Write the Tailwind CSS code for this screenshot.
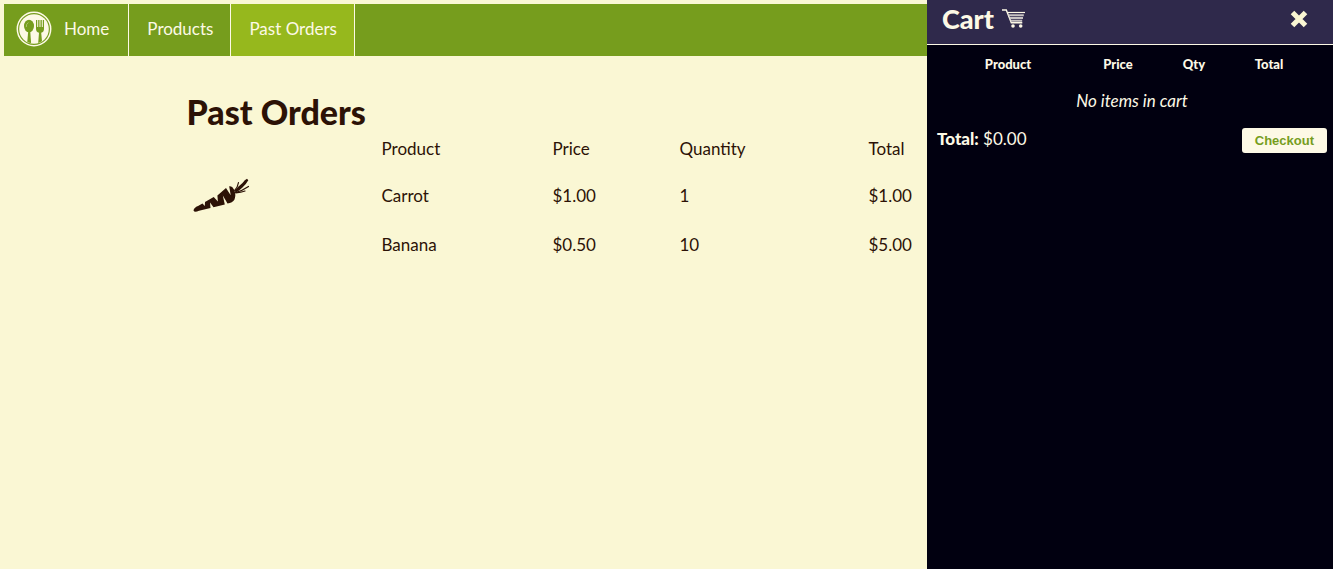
<!DOCTYPE html>
<html lang="en">
<head>
<meta charset="utf-8">
<meta name="viewport" content="width=device-width, initial-scale=1">
<title>Past Orders</title>
<script src="https://cdn.jsdelivr.net/npm/@tailwindcss/browser@4"></script>
</head>
<body class="min-h-screen bg-[#faf7d4] p-1 font-['Lato','Noto_Sans',sans-serif] text-[17px] leading-6 text-[#2c1206]">
<nav class="flex h-13 items-stretch bg-[#769d1d] text-[#fdf9e6]" aria-label="Main">
  <a href="#" class="flex items-center gap-3 border-r border-[#fdf9e6] pr-[19px] pb-0.5 pl-3">
    <svg class="size-9" viewBox="0 0 36 36" aria-hidden="true">
      <circle cx="18" cy="18" r="16.7" fill="none" stroke="#fdf9e6" stroke-width="1.5"/>
      <circle cx="18" cy="18" r="14.8" fill="#fdf9e6"/>
      <g fill="#769d1d">
        <ellipse cx="13" cy="15" rx="5" ry="6.3"/>
        <path d="M12.2 20h2l.9 12.1q-2-.3-3.8-1.2z"/>
        <path d="M20 9h1.2v7h1V9h1.3v7h1V9h1.3v7h1V9H28v9q0 3-2.8 3.8L26 30.200q-1.700 1.200-3.800 1.700l.8-10.100Q20 21 20 18z"/>
      </g>
      <path d="M10.300 16q-.3-3 2-4.500" fill="none" stroke="#c2d18d" stroke-width=".7"/>
    </svg>
    <span>Home</span>
  </a>
  <a href="#" class="flex items-center border-r border-[#fdf9e6] pr-[17px] pb-0.5 pl-[18px]">Products</a>
  <a href="#" aria-current="page" class="flex items-center border-r border-[#fdf9e6] bg-[#96b81d] pr-[17px] pb-0.5 pl-[18px]">Past Orders</a>
</nav>

<main class="mx-auto mt-8 max-w-[960px]">
  <h1 class="pb-0.5 text-[34px] leading-[47px] font-black">Past Orders</h1>
  <table class="w-full table-fixed text-left">
    <colgroup><col class="w-[195px]"><col class="w-[171px]"><col class="w-[127px]"><col class="w-[189px]"><col></colgroup>
    <thead>
      <tr class="h-6"><td></td><th class="font-normal">Product</th><th class="font-normal">Price</th><th class="font-normal">Quantity</th><th class="font-normal">Total</th></tr>
    </thead>
    <tbody>
      <tr class="h-[70px]">
        <td class="pl-1.5">
          <svg class="h-9 w-[58px]" viewBox="0 0 58 36" role="img" aria-label="Carrot">
            <path fill="#2c1206" d="M.5 32.500Q1 29.500 5 28L9.500 25.500l2.300 2.500.2-4 8.700-5 4.200 4.500-.5-6L33 10l4.700 7.300-1.500-9Q39 7.500 41 11.500Q43.300 16.500 41.500 21.500Q39.500 25 34.500 25.400L29.800 17.500 31.800 26.400 20.500 29.300 17 24.500 17.500 30 6 32.700Q1.500 35 .5 32.500z"/>
            <path fill="#2c1206" d="M41.500 13Q45.500 8 49.500 5q2.300-3.500 4.500-4.300l1.300 1.600Q53 6.500 49.500 9.500q-3 3-6.500 5z"/>
            <path fill="none" stroke="#2c1206" stroke-width="1.200" stroke-linecap="round" d="M41.700 12.500Q44.800 9 45.500 4.500M42.500 14.500Q49 13 55.500 8.500M42.800 15Q48 14.500 52 13"/>
          </svg>
        </td>
        <td>Carrot</td><td>$1.00</td><td>1</td><td>$1.00</td>
      </tr>
      <tr class="h-7"><td></td><td>Banana</td><td>$0.50</td><td>10</td><td>$5.00</td></tr>
    </tbody>
  </table>
</main>

<aside class="fixed inset-y-0 right-0 w-[406px] max-w-full bg-[#010010] text-[#fdf9e6]" aria-label="Shopping cart">
  <header class="flex h-[45px] items-center justify-between border-b border-[#fdf9e6] bg-[#2f294b] pr-6 pb-1.5 pl-[15px]">
    <h2 class="flex items-center gap-2 text-[27px] leading-8 font-black">Cart
      <svg class="h-5 w-6" viewBox="0 0 24 20" fill="none" stroke="#fdf9e6" aria-hidden="true">
        <path stroke-width="1.400" d="M0 1h4.300l5 12.800h11"/>
        <path stroke="#c7c2c2" stroke-width="2" d="M6.500 6.200h15.300M7.700 9h13.300M8.700 11.700h11.500"/>
        <path stroke-width="1.200" d="M5.500 3.500H23"/>
        <circle cx="11" cy="17" r="1.800" fill="#fdf9e6" stroke="none"/><circle cx="18.700" cy="17" r="1.800" fill="#fdf9e6" stroke="none"/>
      </svg>
    </h2>
    <button type="button" aria-label="Close cart">
      <svg class="size-5" viewBox="0 0 20 20" aria-hidden="true"><path d="M3.500 3.500l13 13M16.500 3.500l-13 13" stroke="#faf6d3" stroke-width="5"/></svg>
    </button>
  </header>
  <table class="w-full table-fixed text-center">
    <colgroup><col class="w-[24px]"><col class="w-[114px]"><col class="w-[106px]"><col class="w-[46px]"><col class="w-[104px]"><col></colgroup>
    <thead>
      <tr class="h-[38px] text-[13px]"><td></td><th class="font-black">Product</th><th class="font-black">Price</th><th class="font-black">Qty</th><th class="font-black">Total</th><td></td></tr>
    </thead>
    <tbody><tr class="h-9"><td colspan="6" class="pl-1 italic">No items in cart</td></tr></tbody>
  </table>
  <div class="flex items-end justify-between pt-2 pr-1.5 pl-2.5">
    <p class="pb-0.5"><strong class="font-black">Total:</strong> $0.00</p>
    <button type="button" class="h-[25px] rounded-[3px] bg-[#fdf9e6] px-[13px] font-['Liberation_Sans',sans-serif] text-[13px] leading-5 font-bold text-[#769d1d]">Checkout</button>
  </div>
</aside>
</body>
</html>
